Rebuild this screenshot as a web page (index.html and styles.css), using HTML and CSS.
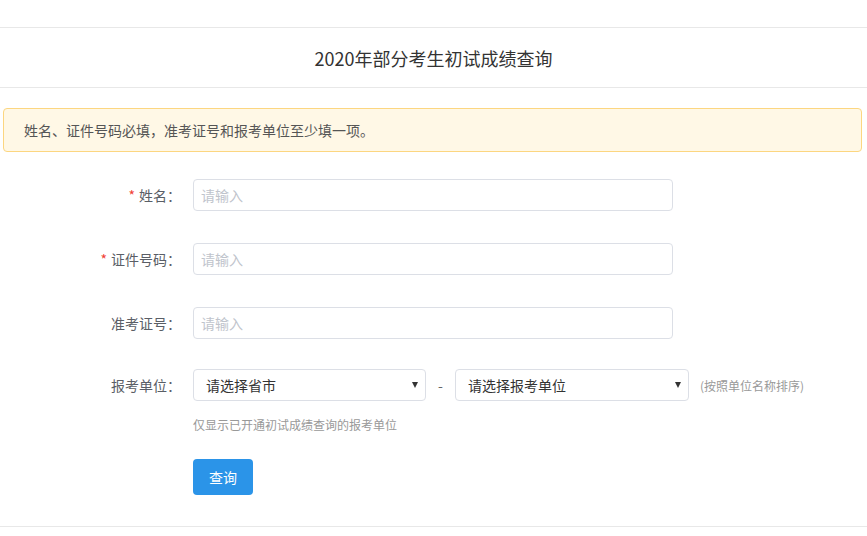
FILE: index.html
```html
<!DOCTYPE html>
<html lang="zh-CN">
<head>
<meta charset="utf-8">
<title>2020年部分考生初试成绩查询</title>
<link rel="stylesheet" href="styles.css">
</head>
<body>
<div class="topbar"></div>
<header class="header">
  <h1 class="title">2020年部分考生初试成绩查询</h1>
</header>
<main class="content">
  <div class="alert">姓名、证件号码必填，准考证号和报考单位至少填一项。</div>
  <form class="form">
    <div class="row">
      <label class="label"><span class="req">*</span>姓名：</label>
      <input class="input" type="text" placeholder="请输入">
    </div>
    <div class="row">
      <label class="label"><span class="req">*</span>证件号码：</label>
      <input class="input" type="text" placeholder="请输入">
    </div>
    <div class="row row-tight">
      <label class="label">准考证号：</label>
      <input class="input" type="text" placeholder="请输入">
    </div>
    <div class="row row-select">
      <label class="label">报考单位：</label>
      <div class="selects">
        <div class="select-wrap s1"><select class="select"><option>请选择省市</option></select></div>
        <span class="dash">-</span>
        <div class="select-wrap s2"><select class="select"><option>请选择报考单位</option></select></div>
        <span class="hint">(按照单位名称排序)</span>
      </div>
    </div>
    <div class="help">仅显示已开通初试成绩查询的报考单位</div>
    <div class="actions">
      <button type="button" class="btn">查询</button>
    </div>
  </form>
</main>
<div class="bottomline"></div>
</body>
</html>
```
FILE: styles.css
```css
* { box-sizing: border-box; }
html, body { margin: 0; padding: 0; background: #fff; }
body {
  font-family: "Noto Sans CJK SC", "Noto Sans", sans-serif;
  font-size: 14px;
  color: #333;
}
.topbar {
  height: 28px;
  border-bottom: 1px solid #e8e8e8;
}
.header {
  height: 60px;
  border-bottom: 1px solid #e8e8e8;
  display: flex;
  align-items: center;
  justify-content: center;
}
.title {
  margin: 0;
  font-size: 18px;
  font-weight: normal;
  color: #333;
  line-height: 1;
}
.content {
  padding-top: 20px;
}
.alert {
  margin: 0 5px 0 3px;
  height: 44px;
  display: flex;
  align-items: center;
  padding-left: 20px;
  background: #fff8e6;
  border: 1px solid #fcd680;
  border-radius: 4px;
  color: #555;
  font-size: 14px;
}
.form {
  padding-top: 27px;
}
.row {
  display: flex;
  align-items: center;
  height: 32px;
  margin-bottom: 32px;
}
.row-tight {
  margin-bottom: 30px;
}
.row-select {
  margin-bottom: 16px;
}
.label {
  width: 193px;
  padding-right: 12px;
  text-align: right;
  color: #5a5e66;
  font-size: 14px;
}
.req {
  color: #f04134;
  margin-right: 4px;
}
.input {
  width: 480px;
  height: 32px;
  border: 1px solid #dcdfe6;
  border-radius: 4px;
  padding: 0 7px;
  font-family: inherit;
  font-size: 14px;
  color: #333;
  outline: none;
}
.input::placeholder { color: #c0c4cc; }
.selects {
  display: flex;
  align-items: center;
}
.select-wrap {
  position: relative;
  height: 32px;
}
.s1 { width: 233px; }
.s2 { width: 234px; }
.select-wrap::after {
  content: "";
  position: absolute;
  right: 8px;
  top: 13px;
  border-left: 3.5px solid transparent;
  border-right: 3.5px solid transparent;
  border-top: 6px solid #333;
  pointer-events: none;
}
.select {
  -webkit-appearance: none;
  appearance: none;
  width: 100%;
  height: 32px;
  border: 1px solid #dcdfe6;
  border-radius: 4px;
  background: #fff;
  padding: 0 20px 0 12px;
  font-family: inherit;
  font-size: 14px;
  color: #333;
  outline: none;
}
.dash {
  width: 29px;
  text-align: center;
  color: #666;
}
.hint {
  margin-left: 11px;
  font-size: 12px;
  color: #999;
}
.help {
  margin-left: 193px;
  font-size: 12px;
  color: #999;
  line-height: 16px;
}
.actions {
  margin-left: 193px;
  margin-top: 26px;
  padding-bottom: 31px;
}
.btn {
  width: 60px;
  height: 36px;
  border: none;
  border-radius: 4px;
  background: #2b94e8;
  color: #fff;
  font-family: inherit;
  font-size: 14px;
  cursor: pointer;
  display: block;
}
.bottomline {
  border-top: 1px solid #e8e8e8;
  height: 10px;
}
```
